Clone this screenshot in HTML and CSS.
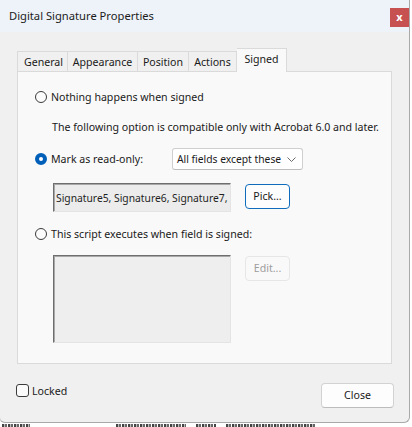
FILE: index.html
```html
<!DOCTYPE html>
<html>
<head>
<meta charset="utf-8">
<link rel="stylesheet" href="styles.css">
</head>
<body>
<div class="dialog">
  <div class="titlebar">
    <span class="title">Digital Signature Properties</span>
    <span class="close-x">x</span>
  </div>
  <div class="content">
    <div class="tabs">
      <div class="tab t-general">General</div>
      <div class="tab t-appearance">Appearance</div>
      <div class="tab t-position">Position</div>
      <div class="tab t-actions">Actions</div>
      <div class="tab t-signed active">Signed</div>
    </div>
    <div class="panel">
      <div class="radio-row r1">
        <span class="radio"></span>
        <span class="label">Nothing happens when signed</span>
      </div>
      <div class="note">The following option is compatible only with Acrobat 6.0 and later.</div>
      <div class="radio-row r2">
        <span class="radio checked"></span>
        <span class="label">Mark as read-only:</span>
        <div class="select">
          <span class="select-text">All fields except these</span>
          <svg class="chev" width="9" height="5" viewBox="0 0 9 5"><path d="M0.5 0.5 L4.5 4.5 L8.5 0.5" fill="none" stroke="#6b6b6b" stroke-width="1"/></svg>
        </div>
      </div>
      <div class="field-row f1">
        <div class="field"><span class="field-text">Signature5, Signature6, Signature7, S</span></div>
        <div class="btn pick">Pick...</div>
      </div>
      <div class="radio-row r3">
        <span class="radio"></span>
        <span class="label">This script executes when field is signed:</span>
      </div>
      <div class="field-row f2">
        <div class="field script"></div>
        <div class="btn edit">Edit...</div>
      </div>
    </div>
    <div class="footer">
      <div class="check-wrap">
        <span class="checkbox"></span>
        <span class="label">Locked</span>
      </div>
      <div class="btn closebtn">Close</div>
    </div>
  </div>
</div>
<div class="behind">
  <span class="ink w1"></span><span class="ink w2"></span><span class="ink w3"></span><span class="ink w4"></span>
</div>
</body>
</html>
```

FILE: styles.css
```css
html, body {
  margin: 0;
  padding: 0;
}
body {
  width: 412px;
  height: 427px;
  overflow: hidden;
  background: #ffffff;
  font-family: "Noto Sans", "Open Sans", sans-serif;
  font-size: 10.6px;
  color: #1a1a1a;
}
.dialog {
  width: 409px;
  height: 422px;
  background: #f0f0f0;
  border-right: 1px solid #a9a9a9;
  border-bottom: 1px solid #a9a9a9;
  border-left: 1px solid #c8c8c8;
  border-radius: 0 0 6px 6px;
  display: flex;
  flex-direction: column;
  box-sizing: content-box;
  margin-left: -1px;
}
.titlebar {
  height: 32px;
  background: #eef3f9;
  display: flex;
  align-items: flex-start;
  justify-content: space-between;
  flex: none;
}
.title {
  margin: 8px 0 0 9px;
  font-size: 11.2px;
  line-height: 16px;
  color: #1b1b1b;
}
.close-x {
  margin-top: 8px;
  width: 19px;
  height: 19px;
  background: #c75050;
  color: #fff;
  font-weight: bold;
  font-size: 11px;
  line-height: 17px;
  text-align: center;
}
.content {
  padding: 16px 0 0 0;
  flex: 1;
  display: flex;
  flex-direction: column;
}
.tabs {
  display: flex;
  align-items: flex-end;
  height: 23px;
  margin-left: 17px;
  position: relative;
  z-index: 1;
}
.tab {
  height: 20px;
  box-sizing: border-box;
  border: 1px solid #dadada;
  border-bottom: none;
  border-left: none;
  background: #f0f0f0;
  text-align: center;
  line-height: 20px;
  color: #1a1a1a;
}
.t-general { width: 51px; border-left: 1px solid #dadada; padding-left: 2px; }
.t-appearance { width: 70px; }
.t-position { width: 51px; }
.t-actions { width: 48px; }
.t-signed { width: 50px; }
.tab.active {
  height: 24px;
  margin-bottom: -1px;
  background: #f9f9f9;
  line-height: 20px;
  border-left: none;
}
.panel {
  margin: 0 17px 0 17px;
  height: 293px;
  box-sizing: border-box;
  background: #f9f9f9;
  border: 1px solid #dadada;
  padding: 17px 0 0 17px;
  display: flex;
  flex-direction: column;
}
.radio-row {
  display: flex;
  align-items: center;
  height: 16px;
}
.radio {
  width: 12px;
  height: 12px;
  box-sizing: border-box;
  border: 1px solid #3b3b3b;
  border-radius: 50%;
  background: #fbfbfb;
  flex: none;
}
.radio.checked {
  border: 4px solid #005fb8;
  background: #ffffff;
}
.label {
  margin-left: 4px;
  line-height: 16px;
  white-space: nowrap;
}
.r2 .label {
  width: 121px;
  flex: none;
}
.note {
  margin: 14px 0 0 17px;
  line-height: 16px;
  white-space: nowrap;
}
.r2 {
  margin-top: 13px;
  height: 22px;
}
.select {
  width: 131px;
  height: 22px;
  box-sizing: border-box;
  border: 1px solid #cfcfcf;
  border-bottom-color: #bdbdbd;
  border-radius: 3px;
  background: #fff;
  display: flex;
  align-items: center;
  justify-content: space-between;
  padding: 0 6px 0 4px;
  white-space: nowrap;
}
.select-text {
  font-size: 10.3px;
}
.chev { flex: none; }
.field-row {
  display: flex;
  align-items: flex-start;
  margin-left: 18px;
}
.f1 { margin-top: 13px; }
.field {
  width: 178px;
  height: 29px;
  box-sizing: border-box;
  background: #ececec;
  border: 1px solid;
  border-color: #6e6e6e #e4e4e4 #e4e4e4 #6e6e6e;
  box-shadow: inset 1px 1px 0 #a8a8a8;
  overflow: hidden;
  white-space: nowrap;
  display: flex;
  align-items: center;
  padding-left: 2px;
}
.field-text {
  display: block;
  width: 174px;
  overflow: hidden;
  line-height: 16px;
  font-size: 10.3px;
  color: #1f1f1f;
}
.btn {
  margin-left: 14px;
  width: 45px;
  height: 25px;
  box-sizing: border-box;
  border-radius: 4px;
  text-align: center;
  line-height: 23px;
  margin-top: 1px;
}
.pick {
  border: 1px solid #0f6cbd;
  background: #fdfdfd;
  color: #1a1a1a;
}
.edit {
  border: 1px solid #e6e6e6;
  background: #f9f9f9;
  color: #9d9d9d;
}
.r3 { margin-top: 14px; }
.f2 { margin-top: 13px; }
.script {
  height: 88px;
  background: #eeeeee;
}
.footer {
  display: flex;
  align-items: flex-start;
  justify-content: space-between;
  margin-top: 19px;
  padding: 0 15px 0 16px;
}
.check-wrap {
  display: flex;
  align-items: center;
  margin-top: 1px;
  height: 13px;
}
.checkbox {
  width: 13px;
  height: 13px;
  box-sizing: border-box;
  border: 1px solid #3b3b3b;
  border-radius: 3px;
  background: #fbfbfb;
}
.check-wrap .label { margin-left: 3px; }
.closebtn {
  width: 73px;
  margin: 0;
  border: 1px solid #d2d2d2;
  border-bottom-color: #bcbcbc;
  background: #fdfdfd;
}
.behind {
  height: 4px;
  display: flex;
  gap: 10px;
  padding-left: 2px;
  align-items: flex-end;
}
.ink {
  height: 3px;
  display: block;
  background: repeating-linear-gradient(90deg, #444 0 2px, #bbb 2px 3px, #666 3px 5px, #fff 5px 6px);
}
.w1 { width: 28px; }
.w2 { width: 70px; margin-left: 76px; }
.w3 { width: 20px; }
.w4 { width: 90px; }
```
